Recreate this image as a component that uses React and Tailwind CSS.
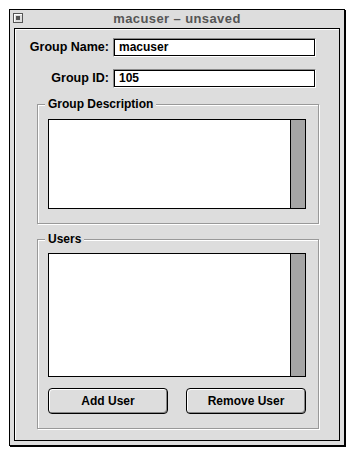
import React from 'react';

const font = { fontFamily: '"Liberation Sans", Arial, sans-serif' };

function Field({ label, value }) {
  return (
    <div className="flex items-center">
      <div className="w-[98px] pr-[4px] text-right text-[12.5px] font-bold text-black">{label}</div>
      <div className="border border-t-[#8a8a8a] border-l-[#8a8a8a] border-r-white border-b-white">
        <div className="w-[201px] h-[17px] border border-black bg-white px-[4px] text-[12px] font-bold leading-[15px] text-black">
          {value}
        </div>
      </div>
    </div>
  );
}

function ListBox({ height }) {
  return (
    <div className="flex border border-black bg-white" style={{ height }}>
      <div className="flex-1" />
      <div className="w-[15px] border-l border-black bg-[#a5a5a5]" />
    </div>
  );
}

function Group({ title, children, className }) {
  return (
    <fieldset
      className={
        'ml-[22px] mr-[20px] border border-[#999] pl-[10px] pr-[12px] shadow-[inset_1px_1px_0_#fff,1px_1px_0_#fff] ' +
        className
      }
    >
      <legend className="-ml-[3px] bg-[#dddddd] px-[3px] text-[12px] font-bold leading-[14px] text-black">
        {title}
      </legend>
      {children}
    </fieldset>
  );
}

function Button({ children }) {
  return (
    <button className="h-[26px] w-[120px] rounded-[4px] border border-black bg-[#dddddd] text-[12px] font-bold text-black shadow-[inset_1px_1px_0_#fff,inset_-1px_-1px_0_#888]">
      {children}
    </button>
  );
}

export default function App() {
  return (
    <div className="h-[454px] w-[354px] bg-white pl-[9px] pt-[9px]" style={font}>
      <div className="flex h-[437px] w-[336px] flex-col border border-black bg-[#dddddd] shadow-[1px_1px_0_#000]">
        <div className="relative flex h-[18px] items-center justify-center">
          <div className="absolute left-[3px] top-[3px] flex h-[10px] w-[10px] items-center justify-center border border-[#555] bg-[#ddd] shadow-[inset_1px_1px_0_#fff]">
            <div className="h-[4px] w-[4px] bg-[#555]" />
          </div>
          <span className="text-[13px] font-bold tracking-[0.4px] text-[#555]">macuser – unsaved</span>
        </div>
        <div className="mx-[4px] mb-[4px] flex flex-1 flex-col border border-black bg-[#dddddd] shadow-[inset_1px_1px_0_#fff]">
          <div className="mt-[9px] flex flex-col gap-[12px]">
            <Field label="Group Name:" value="macuser" />
            <Field label="Group ID:" value="105" />
          </div>
          <Group title="Group Description" className="mt-[9px] pb-[14px] pt-[8px]">
            <ListBox height={90} />
          </Group>
          <Group title="Users" className="mt-[8px] pb-[14px] pt-[7px]">
            <ListBox height={124} />
            <div className="mt-[11px] flex justify-between">
              <Button>Add User</Button>
              <Button>Remove User</Button>
            </div>
          </Group>
        </div>
      </div>
    </div>
  );
}
